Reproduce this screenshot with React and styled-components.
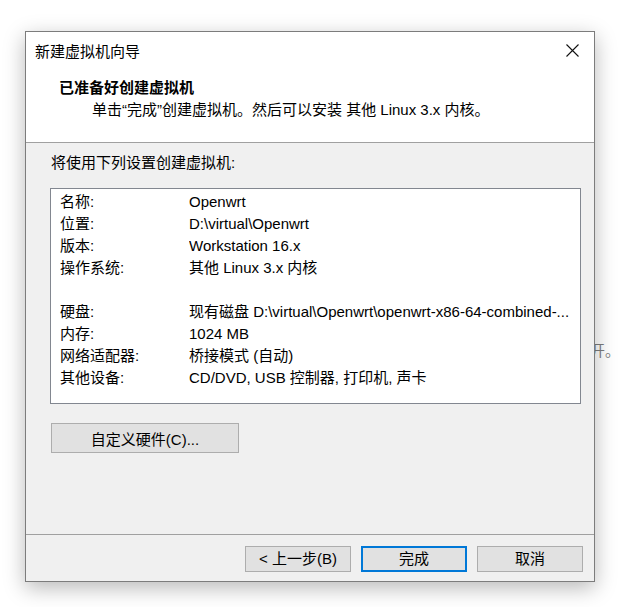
import React from "react";
import styled, { createGlobalStyle } from "styled-components";

const rows = [
  { label: "名称:", value: "Openwrt" },
  { label: "位置:", value: "D:\\virtual\\Openwrt" },
  { label: "版本:", value: "Workstation 16.x" },
  { label: "操作系统:", value: "其他 Linux 3.x 内核" },
  { label: "", value: "" },
  { label: "硬盘:", value: "现有磁盘 D:\\virtual\\Openwrt\\openwrt-x86-64-combined-..." },
  { label: "内存:", value: "1024 MB" },
  { label: "网络适配器:", value: "桥接模式 (自动)" },
  { label: "其他设备:", value: "CD/DVD, USB 控制器, 打印机, 声卡" },
];

function CloseIcon() {
  return (
    <svg width="13" height="13" viewBox="0 0 13 13">
      <path d="M0.5 0.5 L12.5 12.5 M12.5 0.5 L0.5 12.5" stroke="#111" strokeWidth="1.1" fill="none" />
    </svg>
  );
}

function App() {
  return (
    <>
      <GlobalStyle />
      <Page>
        <Dialog>
          <TitleBar>
            <TitleText>新建虚拟机向导</TitleText>
            <CloseButton>
              <CloseIcon />
            </CloseButton>
          </TitleBar>
          <Header>
            <HeaderTitle>已准备好创建虚拟机</HeaderTitle>
            <HeaderSub>单击“完成”创建虚拟机。然后可以安装 其他 Linux 3.x 内核。</HeaderSub>
          </Header>
          <Body>
            <Intro>将使用下列设置创建虚拟机:</Intro>
            <ListBox>
              {rows.map((r, i) => (
                <Row key={i}>
                  <Label>{r.label}</Label>
                  <Value>{r.value}</Value>
                </Row>
              ))}
            </ListBox>
            <CustomButton>自定义硬件(C)...</CustomButton>
          </Body>
          <Footer>
            <Button>&lt; 上一步(B)</Button>
            <Button primary>完成</Button>
            <Button>取消</Button>
          </Footer>
        </Dialog>
        <BackNote>开。</BackNote>
      </Page>
    </>
  );
}

export default App;

const GlobalStyle = createGlobalStyle`
  body {
    margin: 0;
    background: #ffffff;
    font-family: "Liberation Sans", "Noto Sans CJK SC", sans-serif;
    font-size: 15px;
    color: #000;
  }
`;

const Page = styled.div`
  display: flex;
  align-items: flex-start;
  padding: 31px 0 0 25px;
  height: 607px;
  box-sizing: border-box;
  overflow: hidden;
`;

const Dialog = styled.div`
  position: relative;
  z-index: 1;
  width: 570px;
  height: 551px;
  box-sizing: border-box;
  border: 1px solid #7c7c7c;
  background: #f0f0f0;
  box-shadow: 0 6px 20px rgba(0, 0, 0, 0.28);
  display: flex;
  flex-direction: column;
`;

const TitleBar = styled.div`
  height: 38px;
  background: #fff;
  display: flex;
  align-items: center;
  justify-content: space-between;
  padding: 0 15px 0 9px;
`;

const TitleText = styled.div`
  line-height: 38px;
  padding-top: 1px;
`;

const CloseButton = styled.div`
  display: flex;
  align-items: center;
  margin-top: -2px;
`;

const Header = styled.div`
  height: 73px;
  box-sizing: border-box;
  background: #fff;
  border-bottom: 1px solid #a0a0a0;
  padding: 8px 0 0 33px;
`;

const HeaderTitle = styled.div`
  font-weight: bold;
  line-height: 20px;
`;

const HeaderSub = styled.div`
  line-height: 20px;
  padding-left: 33px;
  margin-top: 2px;
`;

const Body = styled.div`
  flex: 1;
  padding: 10px 0 0 24px;
  border-bottom: 1px solid #a0a0a0;
`;

const Intro = styled.div`
  line-height: 20px;
  padding-left: 1px;
`;

const ListBox = styled.div`
  margin-top: 15px;
  width: 531px;
  height: 216px;
  box-sizing: border-box;
  border: 1px solid #828790;
  background: #fff;
  padding-top: 2px;
`;

const Row = styled.div`
  display: grid;
  grid-template-columns: 129px 1fr;
  height: 22px;
  line-height: 22px;
  padding: 0 9px 0 9px;
`;

const Label = styled.div`
  white-space: nowrap;
`;

const Value = styled.div`
  white-space: nowrap;
  overflow: hidden;
  min-width: 0;
`;

const CustomButton = styled.div`
  margin: 19px 0 0 1px;
  width: 188px;
  height: 30px;
  box-sizing: border-box;
  background: #e1e1e1;
  border: 1px solid #adadad;
  display: flex;
  align-items: center;
  justify-content: center;
`;

const Footer = styled.div`
  height: 46px;
  display: flex;
  justify-content: flex-end;
  gap: 10px;
  padding: 11px 11px 0 0;
  box-sizing: border-box;
`;

const Button = styled.div`
  width: 106px;
  height: 26px;
  box-sizing: border-box;
  background: #e1e1e1;
  border: ${(p) => (p.primary ? "2px solid #0078d7" : "1px solid #adadad")};
  display: flex;
  align-items: center;
  justify-content: center;
  padding-bottom: 3px;
`;

const BackNote = styled.div`
  margin: 309px 0 0 -5px;
  line-height: 22px;
  color: #7d7d7d;
  white-space: nowrap;
`;
